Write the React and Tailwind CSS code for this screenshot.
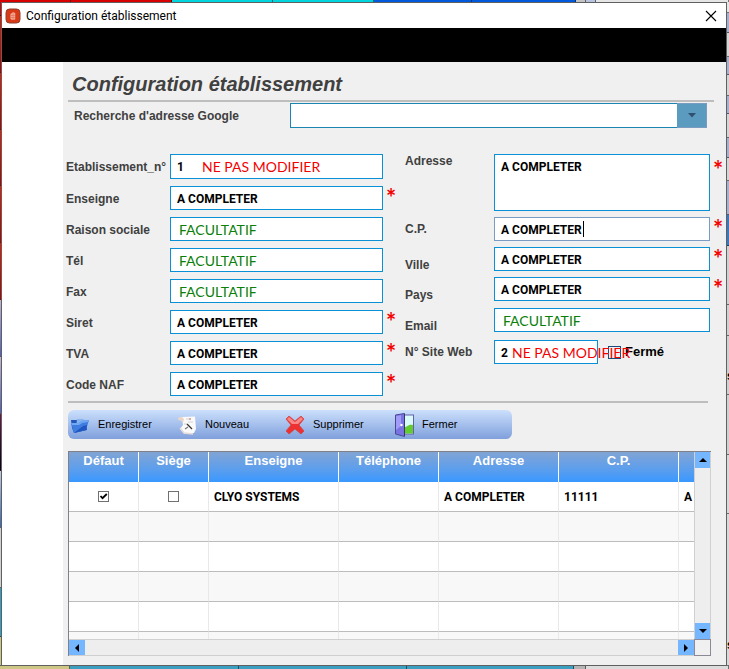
import React from 'react';
import clsx from 'clsx';

const topTiles = [
  { size: 71, color: 'bg-[#d80000]' },
  { size: 101, color: 'bg-[#d80000]' },
  { size: 101, color: 'bg-[#00d4dc]' },
  { size: 102, color: 'bg-[#00d4dc]' },
  { size: 98, color: 'bg-[#0058dc]' },
  { size: 104, color: 'bg-[#0058dc]' },
  { size: 9, color: 'bg-[#c4c4c4]' },
  { size: 9, color: 'bg-[#b8c4e0]' },
  { size: 134, color: 'bg-[#e6e6e6]' },
];

const bottomTiles = [
  { size: 70, color: 'bg-[#cdc684]' },
  { size: 169, color: 'bg-[#3a9fc0]' },
  { size: 168, color: 'bg-[#3a9fc0]' },
  { size: 168, color: 'bg-[#3a9fc0]' },
  { size: 11, color: 'bg-[#b4b4b4]' },
  { size: 143, color: 'bg-[#dcdcdc]' },
];

const leftTiles = [
  { size: 13, color: 'bg-[#d80000]' },
  { size: 57, color: 'bg-linear-to-b from-[#f01800] to-[#b00000]' },
  { size: 57, color: 'bg-linear-to-b from-[#f01800] to-[#b00000]' },
  { size: 57, color: 'bg-linear-to-b from-[#f01800] to-[#b00000]' },
  { size: 57, color: 'bg-linear-to-b from-[#f01800] to-[#b00000]' },
  { size: 57, color: 'bg-linear-to-b from-[#f01800] to-[#b00000]' },
  { size: 57, color: 'bg-linear-to-b from-[#c4b4d0] to-[#5060c0]' },
  { size: 57, color: 'bg-linear-to-b from-[#c4b4d0] to-[#5060c0]' },
  { size: 57, color: 'bg-linear-to-b from-[#701848] to-[#080018]' },
  { size: 57, color: 'bg-linear-to-b from-[#c0cce0] to-[#3868b8]' },
  { size: 60, color: 'bg-[#d0d0d0]' },
  { size: 49, color: 'bg-[#2fa0c8]' },
  { size: 29, color: 'bg-[#cdc684]' },
];

const rightTiles = [
  { size: 10, color: 'bg-[#e6e6e6]' },
  { size: 20, color: 'bg-[#a8b0cc]' },
  { size: 23, color: 'bg-[#d4d4d4]' },
  { size: 18, color: 'bg-[#a8b0cc]' },
  { size: 20, color: 'bg-[#d4d4d4]' },
  { size: 18, color: 'bg-[#a8b0cc]' },
  { size: 23, color: 'bg-[#d4d4d4]' },
  { size: 20, color: 'bg-[#a8b0cc]' },
  { size: 22, color: 'bg-[#d4d4d4]' },
  { size: 34, color: 'bg-[#a8b0cc]' },
  { size: 31, color: 'bg-[#3a78c0]' },
  { size: 60, color: 'bg-[#d0d0d0]' },
  { size: 30, color: 'bg-[#d0d0d0]' },
  { size: 60, color: 'bg-[#d0d0d0]' },
  { size: 60, color: 'bg-[#d0d0d0]' },
  { size: 60, color: 'bg-[#d8d8d8]' },
  { size: 155, color: 'bg-[#d8d8d8]' },
];

const Tiles = ({ tiles, vertical }) => (
  <div className={clsx('flex', vertical ? 'flex-col h-full' : 'w-full h-full')}>
    {tiles.map((tile, i) => (
      <div
        key={i}
        className={clsx(tile.color, 'basis-0', vertical ? 'border-b border-black/50' : 'border-r border-black/50')}
        style={{ flexGrow: tile.size }}
      />
    ))}
  </div>
);

const valueFont = 'font-[Roboto,sans-serif] text-[12px] font-bold text-black';
const inputClass = 'block w-full min-w-0 bg-white border px-1.5 outline-none rounded-none';

const Note = ({ text }) => (
  <span
    className={clsx(
      'absolute inset-y-0 flex items-center whitespace-nowrap pointer-events-none font-[Lato,sans-serif] font-normal text-[14px]',
      text === 'FACULTATIF' ? 'left-[9px] text-[#0a800a]' : 'text-[#f50000]',
    )}
  >
    {text}
  </span>
);

const Mark = ({ show }) => (
  <span className="w-4 shrink-0 pl-[3px] font-[Lato,sans-serif] text-[24px] leading-6 font-bold text-[#f50000]">{show ? '*' : ''}</span>
);

const LeftField = ({ id, label, value = '', note, required, tall }) => (
  <div className={clsx('flex', tall ? 'h-[25px]' : 'h-6')}>
    <label htmlFor={id} className="w-[104px] shrink-0 self-center leading-3 pt-px">{label}</label>
    <div className="relative flex flex-1 min-w-0">
      <input id={id} type="text" defaultValue={value} className={clsx(inputClass, valueFont, 'pt-px border-[#0a90d4]')} />
      {note && <div className={clsx('absolute inset-y-0', note === 'FACULTATIF' ? 'left-0' : 'left-8')}><Note text={note} /></div>}
    </div>
    <Mark show={required} />
  </div>
);

const RightField = ({ id, label, value = '', note, required, className, align = 'self-end', focused }) => (
  <div className={clsx('flex h-6', className)}>
    <label htmlFor={id} className={clsx('w-[89px] shrink-0 leading-3', align)}>{label}</label>
    <div className="relative flex flex-1 min-w-0">
      <input id={id} type="text" defaultValue={value} className={clsx(inputClass, valueFont, 'pt-px', focused ? 'border-[#7a9cc4]' : 'border-[#0a90d4]')} />
      {focused && <span className="absolute left-[89px] top-1 h-4 w-px bg-black pointer-events-none" />}
      {note && <Note text={note} />}
    </div>
    <Mark show={required} />
  </div>
);

const AppIcon = () => (
  <svg viewBox="0 0 16 16" className="w-4 h-4 shrink-0">
    <rect x="1" y="1" width="14" height="14" rx="3.5" fill="#d83a18" stroke="#8c4030" strokeWidth="1" />
    <path d="M5.5 6 8 4.2l2.2.8v6.4l-3.7.3-1-1z" fill="#f4b8a4" />
    <path d="M7.2 5.2v6M8.8 5v6M5.8 7.5h4M5.8 9.5h4" stroke="#d86048" strokeWidth=".5" />
  </svg>
);

const FolderIcon = () => (
  <svg viewBox="0 0 20 18" className="w-5 h-[18px]">
    <path d="M1 4h6l2 2h8v8L4 17 2 12z" fill="#2458b8" />
    <path d="M7 3h6l3 3v7H6z" fill="#85b4ee" />
    <path d="M1 7h8l3-2 7-1-3 10-12 3z" fill="#3f7de0" />
    <path d="M1 7h8l3-2 7-1-1 2-6 1-3 2H2z" fill="#70a8f4" />
    <path d="m4 17 9-7 4-1-1 5z" fill="#2056c0" />
  </svg>
);

const NewIcon = () => (
  <svg viewBox="0 0 20 20" className="w-5 h-5">
    <path d="M5 2 18 1.5 19 14l-2 4-9 1-5-5 3-4z" fill="#fafafa" />
    <path d="M1 3c2-2 5-1 6 1l-1 4C4 5 3 5 1 5z" fill="#ead6c8" />
    <path d="m3 13 4 5 9 1" fill="none" stroke="#e4dcda" strokeWidth="1.5" />
    <path d="M9 4h5M11 7h5M7 9h3" stroke="#c8c8c8" strokeWidth=".8" />
    <path d="m10 9 5 5" stroke="#333" strokeWidth="1.2" />
    <path d="m8 14 3-2" stroke="#777" strokeWidth="1.2" />
    <circle cx="13" cy="4" r="1" fill="#d89898" />
  </svg>
);

const DeleteIcon = () => (
  <svg viewBox="0 0 20 20" className="w-5 h-5">
    <path d="m1 4 3-3 6 5 6-5 3 3-5 6 5 6-3 3-6-5-6 5-3-3 5-6z" fill="#ef3030" stroke="#c94444" strokeWidth=".7" />
    <path d="m2 4 2-2 6 5 6-5 2 2-5 5H7z" fill="#f88888" />
  </svg>
);

const DoorIcon = () => (
  <svg viewBox="0 0 20 24" className="w-5 h-6">
    <rect x="10" y="2" width="9.5" height="19" fill="#d8fbfa" stroke="#6561ab" />
    <path d="M11 14c3 0 3-3 8-2v8.500h-8z" fill="#62cc30" />
    <path d="m1.500 2 9-1.500v23L1.500 21z" fill="#7972e3" stroke="#4c4890" />
    <path d="m2 3 5-.8V13L2 17z" fill="#a19cf8" />
    <path d="M10.500 1v22" stroke="#393768" strokeWidth="1" />
    <circle cx="7.500" cy="12" r="1.200" fill="white" />
  </svg>
);

const Arrow = ({ d }) => (
  <svg viewBox="0 0 8 8" className="w-2 h-2"><path d={d} fill="black" /></svg>
);

const scrollButton = 'flex items-center justify-center shrink-0 bg-[#74b6ff]';

const actions = [
  { label: 'Enregistrer', Icon: FolderIcon, width: 'w-[107px]' },
  { label: 'Nouveau', Icon: NewIcon, width: 'w-[108px]' },
  { label: 'Supprimer', Icon: DeleteIcon, width: 'w-[109px]' },
  { label: 'Fermer', Icon: DoorIcon, width: 'w-[90px]' },
];

const columns = [
  { label: 'Défaut', width: 'w-[70px]' },
  { label: 'Siège', width: 'w-[70px]' },
  { label: 'Enseigne', width: 'w-[130px]' },
  { label: 'Téléphone', width: 'w-[100px]' },
  { label: 'Adresse', width: 'w-[120px]' },
  { label: 'C.P.', width: 'w-[120px]' },
  { label: '', width: 'w-[120px]' },
];

const cellClass = 'h-[30px] border-r border-r-[#e8e8e8] border-b border-b-[#bcbcbc] px-[5px] align-middle whitespace-nowrap';

const TickBox = ({ checked, label }) => (
  <span className="relative flex justify-center">
    <input type="checkbox" defaultChecked={checked} aria-label={label} className="peer appearance-none w-[11px] h-[11px] border border-[#707070] bg-white" />
    <svg viewBox="0 0 11 11" className="absolute w-[11px] h-[11px] pointer-events-none opacity-0 peer-checked:opacity-100">
      <path d="m2.5 5 2 2.2L8.8 3" fill="none" stroke="black" strokeWidth="1.8" />
    </svg>
  </span>
);

const EtablissementTable = () => (
  <div className="border-l border-t border-[#808088]">
    <div className="flex h-[187px]">
      <div className="flex-1 min-w-0 overflow-hidden">
        <table className="table-fixed w-[730px] border-separate border-spacing-0">
          <thead>
            <tr className="bg-linear-to-b from-[#80a4d4] to-[#3898ff] text-white text-[13px]">
              {columns.map((col, i) => (
                <th key={i} className={clsx(col.width, 'h-[30px] border-r border-white p-0 align-top font-bold leading-[18px]')}>{col.label}</th>
              ))}
            </tr>
          </thead>
          <tbody className={valueFont}>
            <tr className="bg-white">
              <td className={cellClass}><TickBox checked label="Défaut" /></td>
              <td className={cellClass}><TickBox label="Siège" /></td>
              <td className={cellClass}>CLYO SYSTEMS</td>
              <td className={cellClass} />
              <td className={cellClass}>A COMPLETER</td>
              <td className={cellClass}>11111</td>
              <td className={cellClass}>A</td>
            </tr>
            {[0, 1, 2, 3, 4].map((row) => (
              <tr key={row} className={row % 2 ? 'bg-white' : 'bg-[#f8f8f8]'}>
                {columns.map((_, i) => <td key={i} className={cellClass} />)}
              </tr>
            ))}
          </tbody>
        </table>
      </div>
      <div className="flex flex-col justify-between border-x border-[#d0d0d0] bg-[#eeeeee]">
        <button aria-label="Haut" className={clsx(scrollButton, 'w-[15px] h-4')}><Arrow d="M0 6 4 2l4 4z" /></button>
        <button aria-label="Bas" className={clsx(scrollButton, 'w-[15px] h-4')}><Arrow d="m0 2 4 4 4-4z" /></button>
      </div>
    </div>
    <div className="flex h-[17px]">
      <div className="flex flex-1 justify-between border-y border-[#d0d0d0] bg-[#eeeeee]">
        <button aria-label="Gauche" className={clsx(scrollButton, 'h-[15px] w-4')}><Arrow d="M6 0 2 4l4 4z" /></button>
        <button aria-label="Droite" className={clsx(scrollButton, 'h-[15px] w-4')}><Arrow d="m2 0 4 4-4 4z" /></button>
      </div>
      <div className="w-[17px] border border-[#8c8898]" />
    </div>
  </div>
);

const App = () => {
  return (
    <div className="font-['Liberation_Sans',Arial,sans-serif] text-[12px] overflow-hidden">
      <div className="h-0.5"><Tiles tiles={topTiles} /></div>
      <div className="flex">
        <div className="w-px shrink-0"><Tiles tiles={leftTiles} vertical /></div>

        <div className="flex-1 min-w-0 border border-[#606060] bg-white">
          <header className="flex items-center h-[25px] pl-[3px] pr-[7px] text-black">
            <AppIcon />
            <span className="flex-1 pl-[5px] font-[Roboto,sans-serif] text-[12px]">Configuration établissement</span>
            <button aria-label="Fermer la fenêtre" className="w-4 h-4 flex items-center justify-center">
              <svg viewBox="0 0 12 12" className="w-3 h-3"><path d="m1 1 10 10M11 1 1 11" stroke="black" strokeWidth="1.1" /></svg>
            </button>
          </header>
          <div className="h-[34px] bg-black" />

          <div className="flex">
            <aside className="w-[61px] shrink-0 bg-white" />
            <main className="flex-1 min-w-0 bg-[#f0f0f0] text-[#404040] font-bold pb-[9px]">
              <h1 className="h-[38px] pl-[9px] pt-2.5 text-[20px] leading-6 italic font-bold whitespace-nowrap">Configuration établissement</h1>
              <div className="ml-[5px] mr-3 h-0.5 bg-[#bebebe]" />

              <div className="flex items-center mt-px pl-[11px] pr-[19px]">
                <label htmlFor="recherche" className="w-[216px] shrink-0">Recherche d'adresse Google</label>
                <div className="relative flex-1 min-w-0">
                  <select id="recherche" className="block appearance-none w-full h-[25px] bg-white border border-[#1c86b0] px-1.5 outline-none rounded-none">
                    <option></option>
                  </select>
                  <span className="absolute right-0 inset-y-0 w-[30px] flex items-center justify-center bg-[#5b9bc0] border border-[#7a9cc0] border-l-0 pointer-events-none">
                    <svg viewBox="0 0 8 5" className="w-2 h-[5px]"><path d="M0 0h8L4 4.5z" fill="#305070" /></svg>
                  </span>
                </div>
              </div>

              <form className="grid grid-cols-[333fr_321fr] gap-x-1.5 mt-[26px] pl-[3px]">
                <div className="flex flex-col gap-[7px]">
                  <LeftField id="numero" label="Etablissement_n°" value="1" note="NE PAS MODIFIER" tall />
                  <LeftField id="enseigne" label="Enseigne" value="A COMPLETER" required />
                  <LeftField id="raison" label="Raison sociale" note="FACULTATIF" />
                  <LeftField id="tel" label="Tél" note="FACULTATIF" />
                  <LeftField id="fax" label="Fax" note="FACULTATIF" />
                  <LeftField id="siret" label="Siret" value="A COMPLETER" required />
                  <LeftField id="tva" label="TVA" value="A COMPLETER" required />
                  <LeftField id="naf" label="Code NAF" value="A COMPLETER" required />
                </div>

                <div className="flex flex-col">
                  <div className="flex h-[57px]">
                    <label htmlFor="adresse" className="w-[89px] shrink-0 leading-[14px]">Adresse</label>
                    <textarea id="adresse" defaultValue="A COMPLETER" className={clsx(inputClass, valueFont, 'flex-1 resize-none border-[#0a90d4] py-[3px]')} />
                    <div className="flex shrink-0 pt-1"><Mark show /></div>
                  </div>
                  <RightField id="cp" label="C.P." value="A COMPLETER" required focused align="self-center" className="mt-1.5" />
                  <RightField id="ville" label="Ville" value="A COMPLETER" required className="mt-1.5" />
                  <RightField id="pays" label="Pays" value="A COMPLETER" required className="mt-1.5" />
                  <RightField id="email" label="Email" note="FACULTATIF" className="mt-[7px]" />
                  <div className="flex items-center h-6 mt-2">
                    <label htmlFor="site" className="w-[89px] shrink-0">N° Site Web</label>
                    <div className="relative flex h-6 w-[104px]">
                      <input id="site" type="text" defaultValue="2" className={clsx(inputClass, valueFont, 'pt-px border-[#0a90d4]')} />
                      <div className="absolute z-10 inset-y-0 left-[18px]"><Note text="NE PAS MODIFIER" /></div>
                    </div>
                    <input id="ferme" type="checkbox" className="appearance-none ml-2.5 w-[13px] h-[13px] shrink-0 border border-[#1c4c78]" />
                    <label htmlFor="ferme" className="pl-1 text-[13px] text-black">Fermé</label>
                  </div>
                </div>
              </form>

              <div className="ml-[5px] mr-[18px] mt-[5px] h-0.5 bg-[#bebebe]" />

              <div className="flex w-[444px] max-w-full h-[29px] mt-[7px] ml-[5px] pl-0.5 rounded-md bg-linear-to-b from-[#cce0fc] to-[#80a0dc]">
                {actions.map(({ label, Icon, width }) => (
                  <button key={label} className={clsx(width, 'flex items-center gap-2 text-[11px] font-normal text-black')}>
                    <Icon />
                    {label}
                  </button>
                ))}
              </div>

              <div className="mt-3 ml-[5px] mr-[15px]">
                <EtablissementTable />
              </div>
            </main>
          </div>
        </div>

        <div className="relative w-0.5 shrink-0 overflow-hidden">
          <Tiles tiles={rightTiles} vertical />
          <span className="absolute top-[365px] left-0 text-[12px] font-bold">s</span>
          <span className="absolute top-[634px] left-0 text-[12px] font-bold">s</span>
        </div>
      </div>
      <div className="h-[3px]"><Tiles tiles={bottomTiles} /></div>
    </div>
  );
};

export default App;
